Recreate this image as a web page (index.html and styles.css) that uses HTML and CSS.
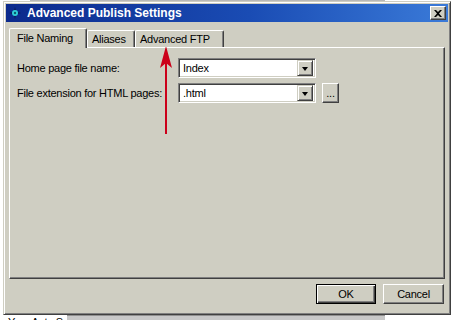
FILE: index.html
```html
<!DOCTYPE html>
<html lang="en">
<head>
  <meta charset="UTF-8" />
  <title>Advanced Publish Settings</title>
  <link rel="stylesheet" href="styles.css">
</head>
<body>
  <div class="behind-top"></div>

  <div class="dialog">
    <div class="titlebar">
      <svg class="app-icon" width="12" height="12" viewBox="0 0 12 12">
        <path d="M6 0 L7.5 4.5 L12 6 L7.5 7.5 L6 12 L4.5 7.5 L0 6 L4.5 4.5 Z" fill="#0a1f5c"/>
        <circle cx="6" cy="6" r="3" fill="#2fd0d8"/>
        <circle cx="6" cy="6" r="1.2" fill="#0a5a70"/>
      </svg>
      <span class="title">Advanced Publish Settings</span>
      <button class="close-btn">
        <svg width="8" height="7" viewBox="0 0 8 7">
          <path d="M0 0h2l2 2 2-2h2L5 3.5 8 7H6L4 5 2 7H0l3-3.5z" fill="#000"/>
        </svg>
      </button>
    </div>

    <div class="tabs">
      <div class="tab active">File Naming</div>
      <div class="tab tab-aliases">Aliases</div>
      <div class="tab tab-ftp">Advanced FTP</div>
    </div>

    <div class="panel">
      <div class="form-grid">
        <label>Home page file name:</label>
        <div class="combo">
          <span class="combo-text">Index</span>
          <span class="drop-btn"><i class="tri"></i></span>
        </div>
        <span></span>

        <label>File extension for HTML pages:</label>
        <div class="combo">
          <span class="combo-text">.html</span>
          <span class="drop-btn"><i class="tri"></i></span>
        </div>
        <button class="small-btn">...</button>
      </div>
    </div>

    <div class="actions">
      <button class="btn default">OK</button>
      <button class="btn btn-cancel">Cancel</button>
    </div>
  </div>

  <div class="behind-bottom">
    <span class="behind-text">Your Auto S</span>
    <div class="behind-bar"></div>
  </div>

  <svg class="arrow" width="20" height="92" viewBox="0 0 20 92">
    <rect x="7" y="14" width="2" height="76" fill="#cc001a"/>
    <path d="M8 2 L14 24 L8 19 L2 24 Z" fill="#cc001a"/>
  </svg>
</body>
</html>
```

FILE: styles.css
```css
body {
  margin: 0;
  width: 455px;
  height: 320px;
  overflow: hidden;
  background: #ffffff;
  font-family: 'Liberation Sans', Arial, sans-serif;
  font-size: 11px;
  letter-spacing: -0.25px;
  color: #000;
  position: relative;
}

.behind-top {
  height: 1px;
  margin-left: 30px;
  width: 355px;
  background: #b8b8b8;
}

.dialog {
  margin-left: 3px;
  width: 448px;
  height: 314px;
  box-sizing: border-box;
  background: #cfcec2;
  border: 1px solid;
  border-color: #cfcec2 #404040 #404040 #cfcec2;
  box-shadow: inset 1px 1px #ffffff, inset -1px -1px #808080;
  padding: 2px;
  display: flex;
  flex-direction: column;
}

.titlebar {
  height: 18px;
  display: flex;
  align-items: center;
  background: linear-gradient(to right, #0c2a8c 0%, #1a4cb4 55%, #3a7ad8 100%);
  color: #fff;
  padding-left: 3px;
  padding-right: 2px;
}

.app-icon {
  margin-right: 6px;
}

.title {
  font-weight: bold;
  font-size: 12px;
  letter-spacing: 0;
  flex: 1;
}

.close-btn {
  width: 16px;
  height: 14px;
  padding: 0;
  background: #cfcec2;
  border: 1px solid;
  border-color: #ffffff #404040 #404040 #ffffff;
  box-shadow: inset -1px -1px #808080;
  display: flex;
  align-items: center;
  justify-content: center;
}

.tabs {
  display: flex;
  align-items: flex-end;
  margin-top: 6px;
  padding-left: 3px;
  height: 19px;
  position: relative;
  z-index: 1;
}

.tab {
  height: 17px;
  box-sizing: border-box;
  border: 1px solid;
  border-bottom: none;
  border-color: #ffffff #404040 #ffffff #ffffff;
  box-shadow: inset -1px 0 #808080;
  border-radius: 2px 2px 0 0;
  padding: 2px 0 0 4px;
  background: #cfcec2;
}

.tab.active {
  width: 78px;
  height: 20px;
  margin-bottom: -1px;
  padding-left: 7px;
  padding-top: 3px;
}

.tab-aliases {
  width: 48px;
}

.tab-ftp {
  width: 89px;
}

.panel {
  margin: 0 3px;
  height: 232px;
  box-sizing: border-box;
  border: 1px solid;
  border-color: #ffffff #404040 #404040 #ffffff;
  box-shadow: inset -1px -1px #808080;
  padding: 10px 0 0 7px;
}

.form-grid {
  display: grid;
  grid-template-columns: 155px 138px 17px;
  grid-auto-rows: 20px;
  column-gap: 6px;
  row-gap: 5px;
  align-items: center;
}

.combo {
  height: 20px;
  box-sizing: border-box;
  background: #fff;
  border: 1px solid;
  border-color: #808080 #ffffff #ffffff #808080;
  box-shadow: inset 1px 1px #404040, inset -1px -1px #cfcec2;
  display: flex;
  align-items: center;
  padding: 2px;
}

.combo-text {
  flex: 1;
  padding-left: 2px;
}

.drop-btn {
  width: 16px;
  height: 16px;
  box-sizing: border-box;
  background: #cfcec2;
  border: 1px solid;
  border-color: #cfcec2 #404040 #404040 #cfcec2;
  box-shadow: inset 1px 1px #ffffff, inset -1px -1px #808080;
  display: flex;
  align-items: center;
  justify-content: center;
}

.tri {
  width: 0;
  height: 0;
  border-left: 3.5px solid transparent;
  border-right: 3.5px solid transparent;
  border-top: 4px solid #000;
  margin-top: 1px;
}

.small-btn,
.btn {
  font-family: inherit;
  font-size: 11px;
  letter-spacing: -0.25px;
  background: #cfcec2;
  border: 1px solid;
  border-color: #ffffff #404040 #404040 #ffffff;
  box-shadow: inset -1px -1px #808080;
  padding: 0;
  color: #000;
}

.small-btn {
  width: 17px;
  height: 20px;
  line-height: 14px;
}

.actions {
  display: flex;
  justify-content: flex-end;
  gap: 7px;
  margin-top: 5px;
  padding-right: 4px;
}

.btn {
  width: 60px;
  height: 20px;
}

.btn-cancel {
  width: 61px;
}

.btn.default {
  outline: 1px solid #000;
  outline-offset: -1px;
  border-color: #000;
  box-shadow: inset 1px 1px #ffffff, inset -1px -1px #404040, inset -2px -2px #808080;
}

.behind-bottom {
  display: flex;
  align-items: flex-start;
  height: 6px;
  overflow: hidden;
}

.behind-text {
  width: 64px;
  padding-left: 8px;
  box-sizing: border-box;
  line-height: 13px;
  margin-top: 1px;
}

.behind-bar {
  margin-left: 3px;
  width: 318px;
  height: 6px;
  background: #c8c8c8;
  border-top: 1px solid #909090;
}

.arrow {
  position: absolute;
  left: 158px;
  top: 44px;
}
```
